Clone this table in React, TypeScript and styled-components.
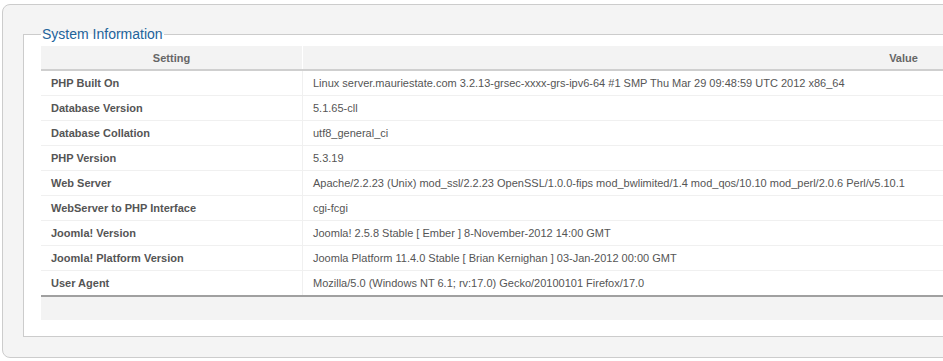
import styled, { createGlobalStyle } from 'styled-components';

const GlobalStyle = createGlobalStyle`
  html, body {
    margin: 0;
    padding: 0;
    overflow: hidden;
    background: #ffffff;
    font-family: "Liberation Sans", Arial, sans-serif;
  }
`;

const rows = [
  { setting: 'PHP Built On', value: 'Linux server.mauriestate.com 3.2.13-grsec-xxxx-grs-ipv6-64 #1 SMP Thu Mar 29 09:48:59 UTC 2012 x86_64' },
  { setting: 'Database Version', value: '5.1.65-cll' },
  { setting: 'Database Collation', value: 'utf8_general_ci' },
  { setting: 'PHP Version', value: '5.3.19' },
  { setting: 'Web Server', value: 'Apache/2.2.23 (Unix) mod_ssl/2.2.23 OpenSSL/1.0.0-fips mod_bwlimited/1.4 mod_qos/10.10 mod_perl/2.0.6 Perl/v5.10.1' },
  { setting: 'WebServer to PHP Interface', value: 'cgi-fcgi' },
  { setting: 'Joomla! Version', value: 'Joomla! 2.5.8 Stable [ Ember ] 8-November-2012 14:00 GMT' },
  { setting: 'Joomla! Platform Version', value: 'Joomla Platform 11.4.0 Stable [ Brian Kernighan ] 03-Jan-2012 00:00 GMT' },
  { setting: 'User Agent', value: 'Mozilla/5.0 (Windows NT 6.1; rv:17.0) Gecko/20100101 Firefox/17.0' },
];

const App = () => {
  return (
    <>
      <GlobalStyle />
      <Page>
        <Panel>
          <Fieldset>
            <Legend>System Information</Legend>
            <InfoTable>
              <thead>
                <tr>
                  <HeadCell $width={241}>Setting</HeadCell>
                  <HeadCell>Value</HeadCell>
                </tr>
              </thead>
              <tbody>
                {rows.map((row) => (
                  <tr key={row.setting}>
                    <LabelCell>{row.setting}</LabelCell>
                    <ValueCell>{row.value}</ValueCell>
                  </tr>
                ))}
              </tbody>
              <tfoot>
                <tr>
                  <FootCell colSpan={2} />
                </tr>
              </tfoot>
            </InfoTable>
          </Fieldset>
        </Panel>
      </Page>
    </>
  );
};

export default App;

const Page = styled.div`
  width: 1560px;
  padding: 4px 0 0 2px;
`;

const Panel = styled.div`
  width: 1540px;
  background-color: #f4f4f4;
  border: 1px solid #cccccc;
  border-radius: 8px;
  padding: 21px 0 20px 20px;
`;

const Fieldset = styled.fieldset`
  margin: 0;
  width: 1483px;
  background-color: #ffffff;
  border: 1px solid #cccccc;
  padding: 4px 17px 16px 17px;
  min-width: 0;
`;

const Legend = styled.legend`
  padding: 0 1px;
  font-size: 14px;
  color: #22639b;
  line-height: 16px;
`;

const InfoTable = styled.table`
  width: 1463px;
  border-collapse: collapse;
  font-size: 11px;
  color: #555555;
`;

const HeadCell = styled.th<{ $width?: number }>`
  ${({ $width }) => ($width ? `width: ${$width}px;` : '')}
  height: 23px;
  padding: 0 10px;
  background-color: #f3f3f3;
  border-bottom: 2px solid #cfcfcf;
  border-left: 1px solid #ffffff;
  color: #666666;
  font-weight: bold;
  text-align: center;
  &:first-child {
    border-left: none;
  }
`;

const LabelCell = styled.td`
  height: 24px;
  padding: 0 10px;
  border-bottom: 1px solid #f0f0f0;
  border-right: 1px solid #f0f0f0;
  font-weight: bold;
  color: #555555;
`;

const ValueCell = styled.td`
  height: 24px;
  padding: 0 10px;
  border-bottom: 1px solid #f0f0f0;
  color: #555555;
`;

const FootCell = styled.td`
  height: 23px;
  padding: 0;
  background-color: #f3f3f3;
  border-top: 2px solid #a0a0a0;
`;
